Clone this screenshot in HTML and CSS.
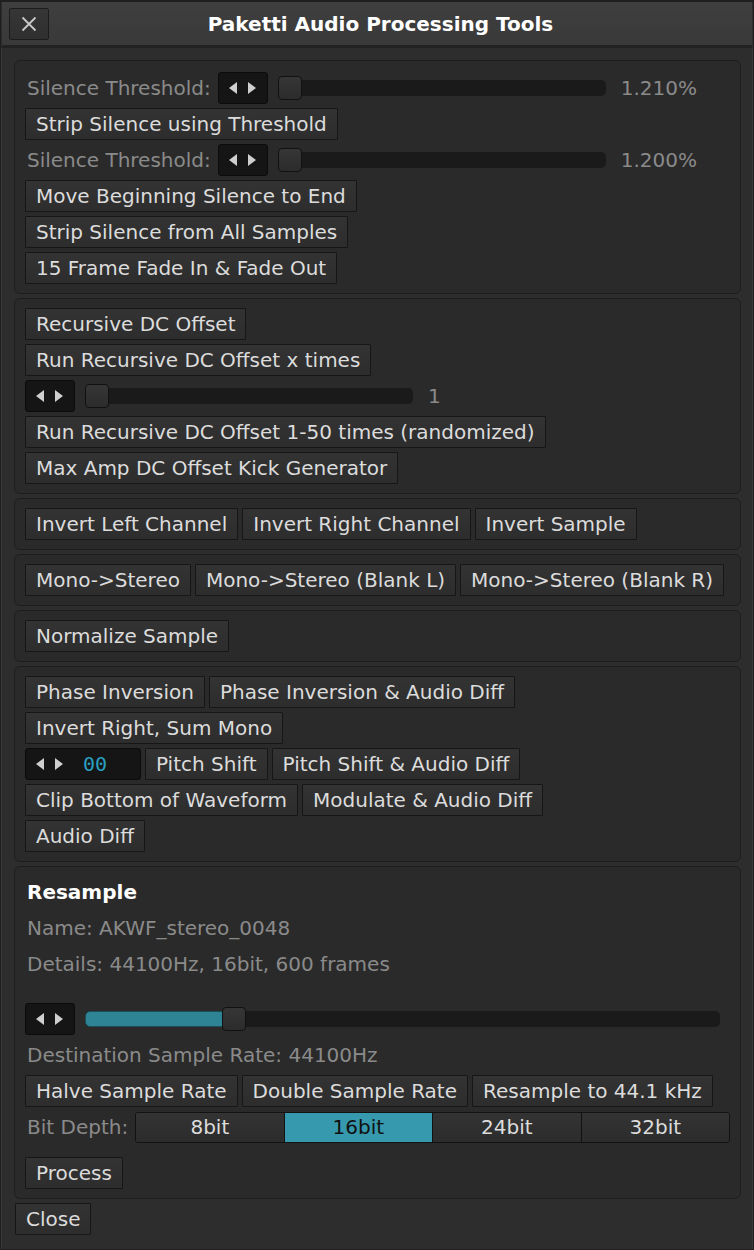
FILE: index.html
```html
<!DOCTYPE html>
<html>
<head>
<meta charset="utf-8">
<title>Paketti Audio Processing Tools</title>
<link rel="stylesheet" href="styles.css">
</head>
<body>
<div class="window">
  <div class="titlebar">
    <button class="close-x" aria-label="Close">
      <svg width="16" height="16" viewBox="0 0 16 16"><path d="M1.5 1.5 L14.5 14.5 M14.5 1.5 L1.5 14.5" stroke="#c8c8c8" stroke-width="1.8" fill="none"/></svg>
    </button>
    <div class="title">Paketti Audio Processing Tools</div>
    <div></div>
  </div>

  <div class="content">
    <div class="section first">
      <div class="row">
        <span class="label">Silence Threshold:</span>
        <div class="spin"><svg class="arrows" width="30" height="14" viewBox="0 0 30 14"><path d="M9 1 L1 7 L9 13 Z M20 1 L28 7 L20 13 Z" fill="#cfcfcf"/></svg></div>
        <div class="slider w328"><div class="fill" style="width:1.2%"></div><div class="thumb" style="left:0px"></div></div>
        <span class="value">1.210%</span>
      </div>
      <div class="row"><button class="btn">Strip Silence using Threshold</button></div>
      <div class="row">
        <span class="label">Silence Threshold:</span>
        <div class="spin"><svg class="arrows" width="30" height="14" viewBox="0 0 30 14"><path d="M9 1 L1 7 L9 13 Z M20 1 L28 7 L20 13 Z" fill="#cfcfcf"/></svg></div>
        <div class="slider w328"><div class="fill" style="width:1.2%"></div><div class="thumb" style="left:0px"></div></div>
        <span class="value">1.200%</span>
      </div>
      <div class="row"><button class="btn">Move Beginning Silence to End</button></div>
      <div class="row"><button class="btn">Strip Silence from All Samples</button></div>
      <div class="row"><button class="btn">15 Frame Fade In &amp; Fade Out</button></div>
    </div>

    <div class="section">
      <div class="row"><button class="btn">Recursive DC Offset</button></div>
      <div class="row"><button class="btn">Run Recursive DC Offset x times</button></div>
      <div class="row">
        <div class="spin"><svg class="arrows" width="30" height="14" viewBox="0 0 30 14"><path d="M9 1 L1 7 L9 13 Z M20 1 L28 7 L20 13 Z" fill="#cfcfcf"/></svg></div>
        <div class="slider w328"><div class="thumb" style="left:0px"></div></div>
        <span class="value">1</span>
      </div>
      <div class="row"><button class="btn">Run Recursive DC Offset 1-50 times (randomized)</button></div>
      <div class="row"><button class="btn">Max Amp DC Offset Kick Generator</button></div>
    </div>

    <div class="section">
      <div class="row">
        <button class="btn">Invert Left Channel</button>
        <button class="btn">Invert Right Channel</button>
        <button class="btn">Invert Sample</button>
      </div>
    </div>

    <div class="section">
      <div class="row">
        <button class="btn">Mono-&gt;Stereo</button>
        <button class="btn">Mono-&gt;Stereo (Blank L)</button>
        <button class="btn">Mono-&gt;Stereo (Blank R)</button>
      </div>
    </div>

    <div class="section">
      <div class="row"><button class="btn">Normalize Sample</button></div>
    </div>

    <div class="section">
      <div class="row">
        <button class="btn">Phase Inversion</button>
        <button class="btn">Phase Inversion &amp; Audio Diff</button>
      </div>
      <div class="row"><button class="btn">Invert Right, Sum Mono</button></div>
      <div class="row">
        <div class="spin spin-value"><svg class="arrows" width="30" height="14" viewBox="0 0 30 14"><path d="M9 1 L1 7 L9 13 Z M20 1 L28 7 L20 13 Z" fill="#cfcfcf"/></svg><span class="num">00</span></div>
        <button class="btn">Pitch Shift</button>
        <button class="btn">Pitch Shift &amp; Audio Diff</button>
      </div>
      <div class="row">
        <button class="btn">Clip Bottom of Waveform</button>
        <button class="btn">Modulate &amp; Audio Diff</button>
      </div>
      <div class="row"><button class="btn">Audio Diff</button></div>
    </div>

    <div class="section">
      <div class="row"><span class="heading">Resample</span></div>
      <div class="row"><span class="label">Name: AKWF_stereo_0048</span></div>
      <div class="row"><span class="label">Details: 44100Hz, 16bit, 600 frames</span></div>
      <div class="spacer-lg"></div>
      <div class="row">
        <div class="spin"><svg class="arrows" width="30" height="14" viewBox="0 0 30 14"><path d="M9 1 L1 7 L9 13 Z M20 1 L28 7 L20 13 Z" fill="#cfcfcf"/></svg></div>
        <div class="slider grow"><div class="fill" style="width:23%"></div><div class="thumb" style="left:137px"></div></div>
      </div>
      <div class="row"><span class="label">Destination Sample Rate: 44100Hz</span></div>
      <div class="row">
        <button class="btn">Halve Sample Rate</button>
        <button class="btn">Double Sample Rate</button>
        <button class="btn">Resample to 44.1 kHz</button>
      </div>
      <div class="row">
        <span class="label">Bit Depth:</span>
        <div class="segmented">
          <div class="seg">8bit</div>
          <div class="seg selected">16bit</div>
          <div class="seg">24bit</div>
          <div class="seg">32bit</div>
        </div>
      </div>
      <div class="spacer-sm"></div>
      <div class="row"><button class="btn">Process</button></div>
    </div>

    <div class="footer"><button class="btn">Close</button></div>
  </div>
</div>
</body>
</html>
```

FILE: styles.css
```css
html, body {
  margin: 0;
  padding: 0;
  background: #262626;
}

body {
  font-family: "DejaVu Sans", "Liberation Sans", sans-serif;
  font-size: 20px;
  color: #dcdcdc;
}

.window {
  width: 754px;
  height: 1250px;
  box-sizing: border-box;
  background: #2d2d2d;
  border: 1px solid #1e1e1e;
  border-top-width: 2px;
  display: flex;
  flex-direction: column;
}

.window > *,
.content > *,
.section > * {
  flex-shrink: 0;
}

.titlebar {
  height: 43px;
  margin: 0 1px;
  background: linear-gradient(#3f3f3f, #393939);
  border-bottom: 3px solid #222;
  display: grid;
  grid-template-columns: 1fr auto 1fr;
  align-items: center;
  padding-left: 7px;
}

.close-x {
  width: 40px;
  height: 32px;
  margin-top: 1px;
  box-sizing: border-box;
  border: 1px solid #1c1c1c;
  border-radius: 2px;
  background: linear-gradient(#363636, #2f2f2f);
  display: flex;
  align-items: center;
  justify-content: center;
  padding: 0;
}

.title {
  font-weight: bold;
  font-size: 20px;
  color: #ffffff;
  white-space: nowrap;
}

.content {
  flex: 1;
  padding: 12px 11px 0 12px;
  display: flex;
  flex-direction: column;
  gap: 4px;
  border-left: 1px solid #383838;
  border-right: 1px solid #383838;
}

.section {
  border: 1px solid #1e1e1e;
  border-radius: 6px;
  background: #2a2a2a;
  padding: 9px 10px;
  display: flex;
  flex-direction: column;
  gap: 4px;
}

.section.first {
  padding-top: 11px;
}

.row {
  display: flex;
  align-items: center;
  gap: 4px;
  height: 32px;
}

.btn {
  height: 32px;
  box-sizing: border-box;
  border: 1px solid #161616;
  border-radius: 1px;
  background: linear-gradient(#333333, #2d2d2d);
  color: #dcdcdc;
  font-family: inherit;
  font-size: 20px;
  padding: 0 10px;
  white-space: nowrap;
  line-height: 30px;
}

.label {
  color: #8a8a8a;
  white-space: nowrap;
  padding-left: 2px;
  margin-right: 3px;
}

.heading {
  font-weight: bold;
  color: #ffffff;
  padding-left: 2px;
}

.value {
  color: #8a8a8a;
  margin-left: 11px;
}

.spin {
  width: 50px;
  height: 32px;
  box-sizing: border-box;
  background: #151515;
  border: 1px solid #0b0b0b;
  border-radius: 3px;
  display: flex;
  align-items: center;
  padding-left: 9px;
  flex: none;
  margin-right: 6px;
}

.spin-value {
  width: 116px;
  margin-right: 0;
}

.spin-value .num {
  font-family: "DejaVu Sans Mono", monospace;
  color: #2a9ec0;
  margin-left: 18px;
}

.slider {
  position: relative;
  height: 16px;
  box-sizing: border-box;
  background: #1a1a1a;
  border-radius: 5px;
  flex: none;
}

.w328 {
  width: 328px;
}

.slider.grow {
  flex: 1;
  margin-right: 10px;
}

.fill {
  position: absolute;
  left: 0;
  top: 0;
  bottom: 0;
  background: #2e8395;
  border: 1px solid #1b4f5a;
  box-sizing: border-box;
  border-radius: 5px 0 0 5px;
}

.thumb {
  position: absolute;
  top: -4px;
  width: 24px;
  height: 24px;
  box-sizing: border-box;
  background: linear-gradient(#363636, #2c2c2c);
  border: 1px solid #111;
  border-radius: 4px;
}

.segmented {
  display: flex;
  flex: 1;
  height: 31px;
  box-sizing: border-box;
  border: 1px solid #121212;
  border-radius: 3px;
  overflow: hidden;
}

.seg {
  flex: 1;
  display: flex;
  align-items: center;
  justify-content: center;
  background: linear-gradient(#333333, #2c2c2c);
  color: #dcdcdc;
  border-left: 1px solid #121212;
}

.seg:first-child {
  border-left: none;
}

.seg.selected {
  background: #3699ae;
  color: #111111;
}

.spacer-lg {
  height: 15px;
}

.spacer-sm {
  height: 6px;
}

.footer {
  display: flex;
  padding-left: 1px;
}
```
